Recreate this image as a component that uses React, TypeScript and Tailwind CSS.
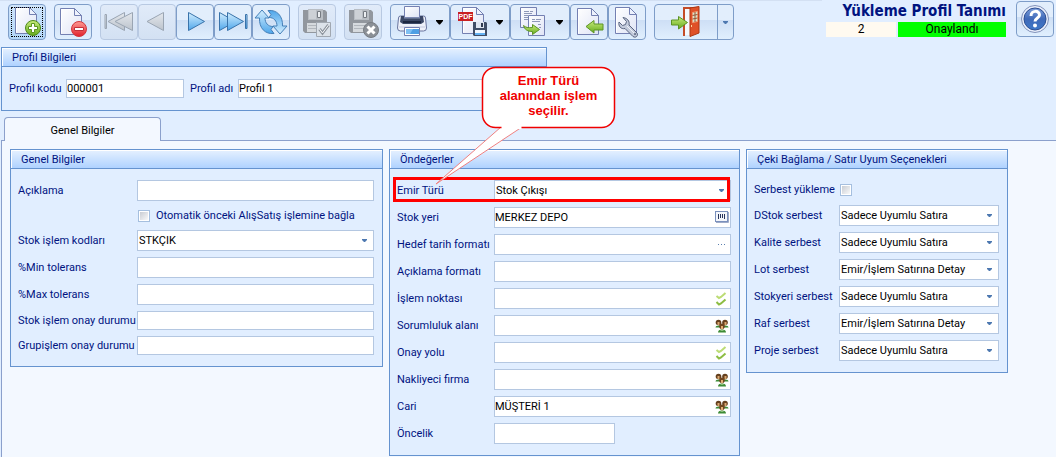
import { ReactNode } from "react";
import clsx from "clsx";

const LOOSE = "Sadece Uyumlu Satıra";
const DETAIL = "Emir/İşlem Satırına Detay";

const serbestRows = [
  { id: "dstok", label: "DStok serbest", value: LOOSE },
  { id: "kalite", label: "Kalite serbest", value: LOOSE },
  { id: "lot", label: "Lot serbest", value: DETAIL },
  { id: "stokyeri", label: "Stokyeri serbest", value: LOOSE },
  { id: "raf", label: "Raf serbest", value: DETAIL },
  { id: "proje", label: "Proje serbest", value: LOOSE },
];

const defaultRows: {
  id: string;
  label: string;
  value?: string;
  lookup?: keyof typeof lookupIcons;
}[] = [
  { id: "stok-yeri", label: "Stok yeri", value: "MERKEZ DEPO", lookup: "barcode" },
  { id: "hedef-tarih", label: "Hedef tarih formatı", lookup: "dots" },
  { id: "aciklama-formati", label: "Açıklama formatı" },
  { id: "islem-noktasi", label: "İşlem noktası", lookup: "checks" },
  { id: "sorumluluk", label: "Sorumluluk alanı", lookup: "people" },
  { id: "onay-yolu", label: "Onay yolu", lookup: "checks" },
  { id: "nakliyeci", label: "Nakliyeci firma", lookup: "people" },
  { id: "cari", label: "Cari", value: "MÜŞTERİ 1", lookup: "people" },
];

/* ---------- small field icons ---------- */

function Barcode() {
  return (
    <svg width="14" height="12" viewBox="0 0 14 12">
      <rect x="0.5" y="0.5" width="12" height="10" fill="#f4f6fb" stroke="#7a90bd" />
      <path d="M1 11.5h12.5V1" fill="none" stroke="#9eabc9" />
      <path d="M3.5 3v5M5.5 3v4M7.5 3v4M9.5 3v5" stroke="#27345c" />
    </svg>
  );
}

function Dots() {
  return (
    <svg width="14" height="12" viewBox="0 0 14 12">
      <path d="M3 6.5h1M6 6.5h1M9 6.5h1" stroke="#5a7fae" />
    </svg>
  );
}

function Checks() {
  return (
    <svg width="14" height="14" viewBox="0 0 14 14" fill="none" strokeWidth="2">
      <path d="M1.5 4l2.5 2 2-1 4.5-4" stroke="#bcdc74" />
      <path d="M1.5 10l2.5 2.5 2-1 4.5-4" stroke="#8dbd43" />
    </svg>
  );
}

function People() {
  return (
    <svg width="14" height="14" viewBox="0 0 14 14">
      <path d="M0.5 8.5q0-2 3.5-2t3.5 2zM6.5 8.5q0-2 3.5-2t3.5 2z" fill="#3d8b36" />
      <circle cx="3.5" cy="3.5" r="2.8" fill="#65401e" />
      <circle cx="10" cy="3.5" r="2.8" fill="#65401e" />
      <path d="M2.5 3h2v3h-2zM9.5 3h2v3h-2z" fill="#dba66f" />
      <circle cx="7" cy="7.3" r="2.8" fill="#70461f" />
      <path d="M6 7h2v3.5H6z" fill="#e3ae76" />
      <path d="M3 13.5q0-3 4-3t4 3z" fill="#3d8b36" />
      <path d="M5.5 11.5h3" stroke="#8bc07c" />
    </svg>
  );
}

const lookupIcons = {
  barcode: <Barcode />,
  dots: <Dots />,
  checks: <Checks />,
  people: <People />,
};

/* ---------- toolbar icons ---------- */

function Gradients() {
  return (
    <svg width="0" height="0" className="absolute">
      <defs>
        <linearGradient id="g-page" x1="0" y1="0" x2="1" y2="1">
          <stop offset="0" stopColor="#ffffff" />
          <stop offset="1" stopColor="#dfe4f6" />
        </linearGradient>
        <linearGradient id="g-blue" x1="0" y1="0" x2="0" y2="1">
          <stop offset="0" stopColor="#d3eeff" />
          <stop offset="1" stopColor="#4ea6ea" />
        </linearGradient>
        <linearGradient id="g-gray" x1="0" y1="0" x2="0" y2="1">
          <stop offset="0" stopColor="#e4e8ed" />
          <stop offset="1" stopColor="#bcc3cc" />
        </linearGradient>
        <linearGradient id="g-green" x1="0" y1="0" x2="0" y2="1">
          <stop offset="0" stopColor="#c9ec7c" />
          <stop offset="1" stopColor="#65ab1c" />
        </linearGradient>
        <linearGradient id="g-red" x1="0" y1="0" x2="0" y2="1">
          <stop offset="0" stopColor="#ff9a94" />
          <stop offset="1" stopColor="#e0202a" />
        </linearGradient>
        <linearGradient id="g-help" x1="0" y1="0" x2="0" y2="1">
          <stop offset="0" stopColor="#7d9fdc" />
          <stop offset="0.5" stopColor="#3f69b8" />
          <stop offset="1" stopColor="#3e78c9" />
        </linearGradient>
      </defs>
    </svg>
  );
}

function Icon({ width = 36, children }: { width?: number; children: ReactNode }) {
  return (
    <svg width={width} height="34" viewBox={`0 0 ${width} 34`} className="shrink-0">
      {children}
    </svg>
  );
}

function Page({ x = 6, y = 3 }: { x?: number; y?: number }) {
  return (
    <g transform={`translate(${x} ${y})`} strokeLinejoin="round">
      <path d="M0.5 0.5h14l7 7v19h-21z" fill="url(#g-page)" stroke="#7480b2" />
      <path d="M14.5 0.5v7h7z" fill="#eef2fd" stroke="#7480b2" />
      <path d="M1.5 25.5V1.5h12" fill="none" stroke="#ffffff" />
    </g>
  );
}

function Floppy({ x, y }: { x: number; y: number }) {
  return (
    <g transform={`translate(${x} ${y})`}>
      <path d="M0 1h22l2 2v21H2l-2-2z" fill="#92979e" />
      <path d="M5 0h15v11H5z" fill="#b9bec4" />
      <path d="M6 1h7v9H6z" fill="#cdd1d6" />
      <path d="M14.5 2.5h3v6h-3z" fill="#eceff2" stroke="#757a81" />
      <path d="M4 14h16v9H4z" fill="#d6dade" />
      <path d="M5 16.5h14M5 19.5h14" stroke="#b2b7bd" />
    </g>
  );
}

function DropArrow() {
  return <path d="M45 15h7v1l-3 3.5h-1L45 16z" fill="#000000" />;
}

function NewIcon() {
  return (
    <Icon>
      <Page x={6} y={2} />
      <circle cx="24" cy="23" r="7.5" fill="url(#g-green)" stroke="#4e8a1a" />
      <path d="M22.5 18.5h3v3h3v3h-3v3h-3v-3h-3v-3h3z" fill="#ffffff" stroke="#5b951f" />
    </Icon>
  );
}

function DeleteIcon() {
  return (
    <Icon>
      <Page x={5} y={3} />
      <circle cx="24" cy="24" r="7.5" fill="url(#g-red)" stroke="#d2353c" />
      <path d="M19.5 22.5h9v3h-9z" fill="#ffffff" stroke="#c2303a" />
    </Icon>
  );
}

function FirstIcon() {
  return (
    <Icon>
      <g fill="url(#g-gray)" stroke="#9aa5b3" strokeLinejoin="round">
        <path d="M4 9.5h1.5v14H4z" />
        <path d="M7 16.5L23.5 7.5v18z" />
        <path d="M14 16.5L31.5 7.5v18z" />
      </g>
    </Icon>
  );
}

function PrevIcon() {
  return (
    <Icon>
      <path d="M8 16.5L24.5 7.5v18z" fill="url(#g-gray)" stroke="#9aa5b3" strokeLinejoin="round" />
    </Icon>
  );
}

function NextIcon() {
  return (
    <Icon>
      <path d="M27.5 16.5L11.5 7.5v18z" fill="url(#g-blue)" stroke="#3973aa" strokeLinejoin="round" />
    </Icon>
  );
}

function LastIcon() {
  return (
    <Icon>
      <g fill="url(#g-blue)" stroke="#3973aa" strokeLinejoin="round">
        <path d="M20.5 16.5L4.5 7.5v18z" />
        <path d="M28.5 16.5L12.5 7.5v18z" />
        <path d="M30.5 9.5H32v14h-1.5z" />
      </g>
    </Icon>
  );
}

function RefreshIcon() {
  const arrow = "M9 5l7 8h-4c0 5 3 8.5 8 8.5l-2 3 3 4C12 29.5 6 23 6.5 13H2z";
  return (
    <Icon>
      <g fill="url(#g-blue)" stroke="#4580b8" strokeLinejoin="round">
        <path d={arrow} />
        <path d={arrow} transform="rotate(180 18 17)" />
      </g>
    </Icon>
  );
}

function SaveIcon() {
  return (
    <Icon>
      <Floppy x={4} y={4} />
      <path d="M17.5 17.5h14v14h-14z" fill="#dce2e9" stroke="#a1a8b1" />
      <path d="M20.5 24l3 4 6-8" fill="none" stroke="#8d949d" strokeWidth="3" />
      <path d="M20.5 24l3 4 6-8" fill="none" stroke="#f7f9fb" />
    </Icon>
  );
}

function SaveCloseIcon() {
  return (
    <Icon>
      <Floppy x={4} y={4} />
      <circle cx="26" cy="25" r="7.5" fill="#8b9097" stroke="#777c83" />
      <path d="M22.5 21.5l7 7M29.5 21.5l-7 7" stroke="#ffffff" strokeWidth="3" />
    </Icon>
  );
}

function PrintIcon() {
  return (
    <Icon width={58}>
      <path d="M7.5 13q0-2 2-2h23q2 0 2 2l1 10q0 3-3 3h-23q-3 0-3-3z" fill="#eef1fa" stroke="#68749e" />
      <path d="M10 11h22l1 6-3 2H12l-3-2z" fill="#3b4866" />
      <path d="M12 17h18" stroke="#1c2741" strokeWidth="2" />
      <path d="M13.5 1.5h15v11h-15z" fill="url(#g-page)" stroke="#7480b2" />
      <path d="M13 13h16" stroke="#8793b2" />
      <path d="M8 22h26" stroke="#c5cbe0" />
      <path d="M13.5 22.5h15v8h-15z" fill="#ffffff" stroke="#7480b2" />
      <path d="M15 24h13v5H15z" fill="#7fc0f3" />
      <path d="M22 24h6v5h-9z" fill="#4f9fe4" />
      <DropArrow />
    </Icon>
  );
}

function PdfIcon() {
  return (
    <Icon width={58}>
      <Page x={11} y={2} />
      <rect x="7" y="7" width="15" height="9" fill="#c92021" />
      <text
        x="14.5"
        y="14"
        textAnchor="middle"
        className="fill-white font-['Liberation_Sans'] text-[7px] font-bold"
      >
        PDF
      </text>
      <path d="M22 17h13l1 1v13H23l-1-1z" fill="#3f4d66" />
      <path d="M25 17h8v6h-8z" fill="#dfe6f2" />
      <path d="M30 18h2v4h-2z" fill="#2e3950" />
      <path d="M24 25h10v5H24z" fill="#f2f8ff" />
      <path d="M24 28h10v2H24z" fill="#65b2f2" />
      <DropArrow />
    </Icon>
  );
}

function CopyIcon() {
  return (
    <Icon width={58}>
      <g stroke="#7480b2">
        <path d="M9.5 2.5h16v20h-16z" fill="url(#g-page)" />
        <path d="M17.5 10.5h16v20h-16z" fill="url(#g-page)" />
      </g>
      <path
        d="M13 6.5h5M19 6.5h3M13 8.5h8M13 10.5h4M13 12.5h4M13 14.5h4M21 14.5h3M25 14.5h5M21 16.5h8M27 19.5h3M28 22.5h2"
        stroke="#8f98b8"
      />
      <path
        d="M12.5 20.5c2 2 5 2.5 9 2v-3l7 5-7 5v-3c-5 0-8-2-9-6z"
        fill="url(#g-green)"
        stroke="#5c9425"
        strokeLinejoin="round"
      />
      <DropArrow />
    </Icon>
  );
}

function BackIcon() {
  return (
    <Icon>
      <Page x={6} y={3} />
      <path
        d="M15 21.5l8-6v3.5h9v6h-9v3z"
        fill="url(#g-green)"
        stroke="#5c9425"
        strokeLinejoin="round"
      />
    </Icon>
  );
}

function ToolIcon() {
  return (
    <Icon>
      <Page x={6} y={2} />
      <path
        d="M14 12.5l3.5 4-1 3-3 1L10 17c-1 4 2 7.5 6 6.5l8 8c3 2 5.500-1 4-3.500l-8-8c1-4-2-7-6-7.500z"
        fill="#c3cbdc"
        stroke="#59647f"
        strokeLinejoin="round"
      />
      <path d="M18 21l8 8" stroke="#eef2f8" />
      <circle cx="26" cy="29" r="1" fill="#59647f" />
    </Icon>
  );
}

function ExitIcon() {
  return (
    <Icon width={62}>
      <path d="M29 31V3h12" fill="none" stroke="#c44c28" strokeWidth="2" />
      <path d="M30 30V4h5v26z" fill="#f5f8fd" />
      <path d="M35 3l9-1.5V28l-9 3.5z" fill="#df5128" stroke="#ad3813" />
      <path d="M37.5 7.5l5-1v10l-5 1z" fill="#d8e6cc" stroke="#f19871" />
      <path d="M40 7v10M37.5 10.5l5-1M37.5 14l5-1" stroke="#9a5434" />
      <path d="M36.5 20v2" stroke="#ffd39c" />
      <path
        d="M16.5 15h7v-3.5l9 6-9 6.500v-4h-7z"
        fill="url(#g-green)"
        stroke="#5c9425"
        strokeLinejoin="round"
      />
    </Icon>
  );
}

function HelpIcon() {
  return (
    <Icon>
      <circle cx="18" cy="17" r="13.5" fill="#e9eefa" stroke="#8293bb" />
      <circle cx="18" cy="17" r="11" fill="url(#g-help)" stroke="#2e4f91" />
      <path
        d="M14 14c0-6 8.5-6 8.5-1 0 3-4.5 3-4.5 6.5"
        fill="none"
        stroke="#ffffff"
        strokeWidth="3"
      />
      <circle cx="18" cy="23.5" r="2" fill="#ffffff" />
    </Icon>
  );
}

/* ---------- building blocks ---------- */

function ToolButton({
  label,
  disabled,
  focused,
  children,
}: {
  label: string;
  disabled?: boolean;
  focused?: boolean;
  children: ReactNode;
}) {
  return (
    <button
      type="button"
      aria-label={label}
      disabled={disabled}
      className={clsx(
        "relative flex h-9 shrink-0 rounded-sm border",
        disabled
          ? "border-[#b8c9e2] bg-linear-to-b from-[#e1ebf9] to-[#d3e1f3]"
          : "border-[#7e9dc8]",
        !disabled &&
          (focused
            ? "bg-linear-to-b from-[#cfe4fb] to-[#b2d6f8]"
            : "bg-linear-to-b from-[#e2eefc] from-45% via-[#cedff5] via-45% to-[#e0effe]")
      )}
    >
      {children}
      {focused && <span className="absolute inset-0.5 border border-dotted border-black" />}
    </button>
  );
}

function Panel({
  title,
  className,
  children,
}: {
  title: string;
  className?: string;
  children: ReactNode;
}) {
  return (
    <section className={clsx("border border-[#6593cf] bg-[#e1eeff]", className)}>
      <h2 className="h-[19px] border-b border-[#6593cf] bg-linear-to-b from-[#e6f1ff] to-[#afd2ff] pl-2.5 leading-[19px] shadow-[inset_1px_1px_0_white]">
        {title}
      </h2>
      {children}
    </section>
  );
}

function TextField({
  id,
  value,
  className,
}: {
  id: string;
  value?: string;
  className?: string;
}) {
  return (
    <input
      id={id}
      type="text"
      defaultValue={value}
      className={clsx(
        "min-w-0 border border-[#b4c7e1] bg-white text-black outline-none",
        className
      )}
    />
  );
}

function SelectField({ id, value }: { id: string; value: string }) {
  return (
    <div className="relative min-w-0 flex-1">
      <select
        id={id}
        defaultValue={value}
        className="block h-[21px] w-full appearance-none border border-[#b4c7e1] bg-white pl-px text-black outline-none"
      >
        <option>{value}</option>
      </select>
      <svg
        width="5"
        height="3"
        viewBox="0 0 5 3"
        className="pointer-events-none absolute top-[9px] right-[7px]"
      >
        <path d="M0 0h5v1L3 3H2L0 1z" fill="#4d78b0" />
      </svg>
    </div>
  );
}

function CheckBox({ id }: { id: string }) {
  return (
    <input
      id={id}
      type="checkbox"
      className="size-3 shrink-0 appearance-none border border-[#a5bfdf] bg-linear-to-br from-[#c3c7ce] to-white shadow-[inset_0_0_0_1px_white]"
    />
  );
}

function Row({
  id,
  label,
  labelWidth,
  children,
}: {
  id: string;
  label: string;
  labelWidth: string;
  children: ReactNode;
}) {
  return (
    <div className="relative flex items-center">
      <label htmlFor={id} className={clsx("shrink-0 whitespace-nowrap", labelWidth)}>
        {label}
      </label>
      {children}
    </div>
  );
}

function Callout() {
  return (
    <div className="pointer-events-none absolute top-[66px] left-[435px] h-[120px] w-[182px]">
      <svg width="182" height="120" viewBox="0 0 182 120" className="absolute inset-0">
        <path d="M66 61L1 118 87 61z" fill="#ffffff" stroke="#f08080" />
        <rect x="47.5" y="1.5" width="132" height="60" rx="13" fill="#ffffff" stroke="#f00000" strokeWidth="1.5" />
        <path d="M66.5 61.5h20" stroke="#ffffff" strokeWidth="3" />
      </svg>
      <p className="absolute top-[7px] left-[47px] w-[133px] text-center font-['Liberation_Sans',sans-serif] text-[13px] leading-[15px] font-bold text-[#f00000]">
        Emir Türü
        <br />
        alanından işlem
        <br />
        seçilir.
      </p>
    </div>
  );
}

export default function App() {
  return (
    <main className="relative flex min-h-screen flex-col bg-[#e1eeff] font-['Roboto',sans-serif] text-[11px] leading-[15px] text-[#00137f]">
      <Gradients />

      <header className="flex h-[47px] shrink-0 justify-between">
        <div className="flex gap-2 border-t border-[#d3e0f3] pt-[3px] pr-22 pl-2">
          <ToolButton label="Yeni" focused>
            <NewIcon />
          </ToolButton>
          <ToolButton label="Sil">
            <DeleteIcon />
          </ToolButton>
          <div className="flex">
            <ToolButton label="İlk kayıt" disabled>
              <FirstIcon />
            </ToolButton>
            <ToolButton label="Önceki kayıt" disabled>
              <PrevIcon />
            </ToolButton>
            <ToolButton label="Sonraki kayıt">
              <NextIcon />
            </ToolButton>
            <ToolButton label="Son kayıt">
              <LastIcon />
            </ToolButton>
            <ToolButton label="Yenile">
              <RefreshIcon />
            </ToolButton>
          </div>
          <ToolButton label="Kaydet" disabled>
            <SaveIcon />
          </ToolButton>
          <ToolButton label="Vazgeç" disabled>
            <SaveCloseIcon />
          </ToolButton>
          <div className="flex">
            <ToolButton label="Yazdır">
              <PrintIcon />
            </ToolButton>
            <ToolButton label="PDF kaydet">
              <PdfIcon />
            </ToolButton>
            <ToolButton label="Kopyala">
              <CopyIcon />
            </ToolButton>
            <ToolButton label="Geri al">
              <BackIcon />
            </ToolButton>
            <ToolButton label="Ayarlar">
              <ToolIcon />
            </ToolButton>
          </div>
          <ToolButton label="Çıkış">
            <ExitIcon />
            <span className="flex h-full w-4 items-center justify-center border-l border-[#7e9dc8]">
              <svg width="5" height="3" viewBox="0 0 5 3">
                <path d="M0 0h5v1L3 3H2L0 1z" fill="#4d78b0" />
              </svg>
            </span>
          </ToolButton>
        </div>

        <div className="flex gap-2.5 pt-px pr-0.5">
          <div className="w-[180px] shrink-0">
            <h1 className="h-[21px] text-right font-['DejaVu_Sans_Condensed','DejaVu_Sans',sans-serif] text-[15px] leading-[21px] font-bold whitespace-nowrap">
              Yükleme Profil Tanımı
            </h1>
            <div className="flex gap-0.5 text-center text-xs leading-[15px] text-black">
              <span className="w-[70px] bg-[#fffaf0]">2</span>
              <span className="flex-1 bg-[#00ff00]">Onaylandı</span>
            </div>
          </div>
          <ToolButton label="Yardım">
            <HelpIcon />
          </ToolButton>
        </div>
      </header>

      <Panel title="Profil Bilgileri" className="ml-px w-[546px]">
        <div className="flex items-center py-3 pr-2 pl-[7px]">
          <label htmlFor="profil-kodu" className="w-[57px] shrink-0">
            Profil kodu
          </label>
          <TextField id="profil-kodu" value="000001" className="h-[19px] w-[118px]" />
          <label htmlFor="profil-adi" className="ml-1.5 w-12 shrink-0 whitespace-nowrap">
            Profil adı
          </label>
          <TextField id="profil-adi" value="Profil 1" className="h-[19px] flex-1" />
        </div>
      </Panel>

      <div className="mt-1.5 ml-1 flex" role="tablist">
        <button
          type="button"
          role="tab"
          aria-selected="true"
          className="relative -mb-px h-6 w-[157px] rounded-t-sm border border-b-0 border-[#8ba0cc] bg-[#f3f8ff] pt-px text-black"
        >
          Genel Bilgiler
        </button>
      </div>

      <div className="ml-px flex-1 border-t border-l border-[#8ba0cc] bg-[#f3f8ff] pt-2 pr-12 pb-px pl-2">
        <div className="grid grid-cols-[minmax(0,373fr)_minmax(0,351fr)_minmax(0,262fr)] items-start gap-1.5">
          <Panel title="Genel Bilgiler">
            <div className="flex flex-col gap-1.5 py-[11px] pr-2 pl-[7px]">
              <Row id="aciklama" label="Açıklama" labelWidth="w-[119px]">
                <TextField id="aciklama" className="h-[21px] flex-1" />
              </Row>
              <div className="flex h-[17px] items-center gap-1.5 pl-[120px]">
                <CheckBox id="otomatik" />
                <label htmlFor="otomatik" className="whitespace-nowrap">
                  Otomatik önceki AlışSatış işlemine bağla
                </label>
              </div>
              <Row id="stok-kod" label="Stok işlem kodları" labelWidth="w-[119px]">
                <SelectField id="stok-kod" value="STKÇIK" />
              </Row>
              <Row id="min-tolerans" label="%Min tolerans" labelWidth="w-[119px]">
                <TextField id="min-tolerans" className="h-[21px] flex-1" />
              </Row>
              <Row id="max-tolerans" label="%Max tolerans" labelWidth="w-[119px]">
                <TextField id="max-tolerans" className="h-[21px] flex-1" />
              </Row>
              <Row id="stok-onay" label="Stok işlem onay durumu" labelWidth="w-[119px]">
                <TextField id="stok-onay" className="h-[19px] flex-1" />
              </Row>
              <Row id="grup-onay" label="Grupişlem onay durumu" labelWidth="w-[119px]">
                <TextField id="grup-onay" className="h-[19px] flex-1" />
              </Row>
            </div>
          </Panel>

          <Panel title="Öndeğerler">
            <div className="flex flex-col gap-1.5 py-[11px] pr-2 pl-[7px]">
              <Row id="emir-turu" label="Emir Türü" labelWidth="w-[97px]">
                <SelectField id="emir-turu" value="Stok Çıkışı" />
                {/* red frame around the highlighted row */}
                <span className="pointer-events-none absolute -top-[3px] right-px -bottom-px -left-1 border-3 border-[#ff0000]" />
              </Row>
              {defaultRows.map((row) => (
                <Row key={row.id} id={row.id} label={row.label} labelWidth="w-[97px]">
                  <TextField id={row.id} value={row.value} className="h-[21px] flex-1" />
                  {row.lookup && (
                    <button
                      type="button"
                      aria-label={`${row.label} seç`}
                      className="absolute top-1 right-0.5"
                    >
                      {lookupIcons[row.lookup]}
                    </button>
                  )}
                </Row>
              ))}
              <Row id="oncelik" label="Öncelik" labelWidth="w-[97px]">
                <TextField id="oncelik" className="h-[21px] w-[121px]" />
              </Row>
            </div>
          </Panel>

          <Panel title="Çeki Bağlama / Satır Uyum Seçenekleri">
            <div className="flex flex-col gap-1.5 py-[11px] pr-2 pl-[7px]">
              <div className="flex h-[19px] items-center">
                <label htmlFor="serbest-yukleme" className="w-[86px] whitespace-nowrap">
                  Serbest yükleme
                </label>
                <CheckBox id="serbest-yukleme" />
              </div>
              {serbestRows.map((row) => (
                <Row key={row.id} id={row.id} label={row.label} labelWidth="w-[85px]">
                  <SelectField id={row.id} value={row.value} />
                </Row>
              ))}
            </div>
          </Panel>
        </div>
      </div>

      <Callout />
    </main>
  );
}
